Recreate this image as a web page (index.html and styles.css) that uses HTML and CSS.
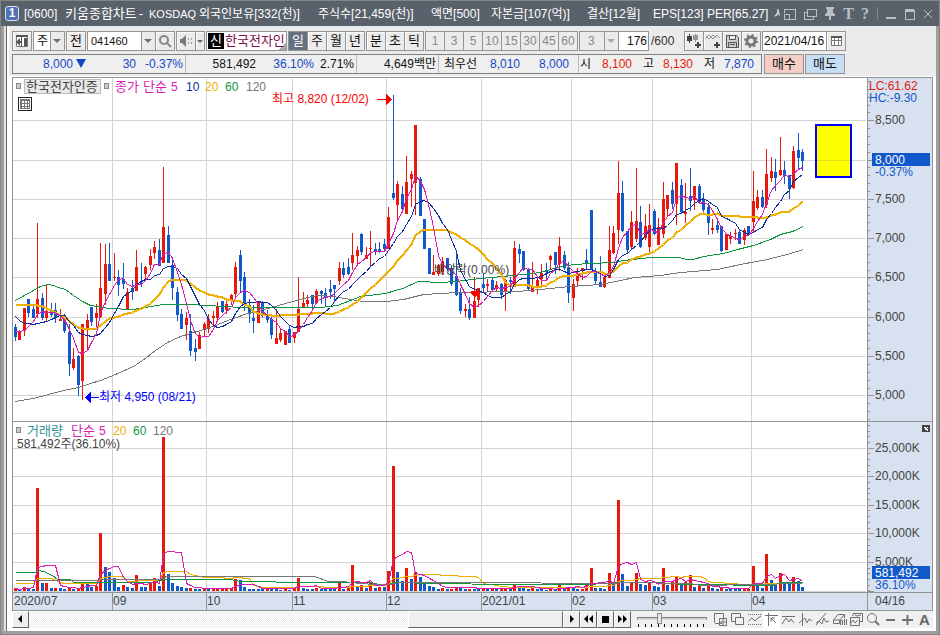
FILE: index.html
```html
<!DOCTYPE html>
<html lang="ko">
<head>
<meta charset="utf-8">
<title>[0600] 키움종합차트</title>
<link rel="stylesheet" href="styles.css">
</head>
<body>
<div class="window">
  <header class="title">
    <span class="badge">1</span>
    <h1 class="caption"><span>[0600]</span><span class="name">키움종합차트</span><span>-</span><span class="market">KOSDAQ</span><span>외국인보유[332(천)]</span><span>주식수[21,459(천)]</span><span>액면[500]</span><span>자본금[107(억)]</span><span>결산[12월]</span><span>EPS[123]</span><span>PER[65.27]</span><span>시</span></h1>
    <div class="title-tools">
      <button aria-label="크기"><svg width="13" height="12"><path d="M1 5V1H12V11H6M1 6H6V11H1Z"/></svg></button>
      <button aria-label="새 창"><svg width="14" height="12"><path d="M4 1H13V8H4ZM4 4H1V11H10V8"/></svg></button>
      <button aria-label="고정"><svg width="12" height="14"><path class="solid" d="M2 0H10V2H9V6L11 7V9H7V13H5V9H1V7L3 6V2H2Z"/></svg></button>
      <button class="glyph" aria-label="글꼴">T</button>
      <button class="glyph" aria-label="도움말">?</button>
      <i class="rule"></i>
      <button aria-label="최소화"><svg width="12" height="12"><path class="solid" d="M1 9H11V11H1Z"/></svg></button>
      <button aria-label="최대화"><svg width="12" height="12"><path d="M1 2H10V11H1Z"/><path class="solid" d="M1 1H10V4H1Z"/></svg></button>
      <button aria-label="닫기"><svg width="10" height="12"><path d="M1 2L9 10M9 2L1 10"/></svg></button>
    </div>
  </header>
  <main class="frame">
    <div class="inner">
      <div class="tools">
        <div class="toolbar">
          <button class="btn" aria-label="패널"><svg width="14" height="14"><path class="fillw" d="M1.500 1.500H12.500V12.500H1.500Z"/><path class="dark" d="M1 1H13V3H1ZM6 1H7V13H6ZM1 8L5 4V7H6V9H5V12ZM9 4H12V12H9Z"/></svg></button>
          <span class="select w32"><select aria-label="구분"><option>주</option></select></span>
          <button class="btn">전</button>
          <span class="group">
            <span class="select w69"><input type="text" value="041460" aria-label="종목코드"></span>
            <button class="btn" aria-label="검색"><svg width="14" height="14"><circle cx="6" cy="6" r="4" fill="none" stroke="#888" stroke-width="2"/><path d="M9 9L13 13" stroke="#888" stroke-width="2"/></svg></button>
          </span>
          <span class="group">
            <button class="btn" aria-label="소리"><svg width="14" height="12"><path fill="#777" d="M1 4H3L7 0V12L3 8H1Z"/><path fill="#999" d="M9 3H10V5H9ZM9 7H10V9H9ZM12 3H13V5H12ZM12 7H13V9H12Z"/></svg></button>
            <button class="btn slim" aria-label="소리 메뉴"><svg width="6" height="3"><path fill="#666" d="M0 0H6L3 3Z"/></svg></button>
          </span>
          <a class="stock" href="#stock"><b>신</b><span>한국전자인</span></a>
          <span class="group"><button class="btn on">일</button><button class="btn">주</button><button class="btn">월</button><button class="btn">년</button></span>
          <span class="group"><button class="btn">분</button><button class="btn">초</button><button class="btn">틱</button></span>
          <span class="group off"><button class="btn">1</button><button class="btn">3</button><button class="btn">5</button><button class="btn">10</button><button class="btn">15</button><button class="btn">30</button><button class="btn">45</button><button class="btn">60</button></span>
          <span class="group">
            <span class="select w40 off"><select aria-label="분 단위" disabled><option>3</option></select></span>
            <input class="count" type="text" value="176" aria-label="봉 개수">
          </span>
          <span class="total">/600</span>
          <span class="group">
            <button class="btn" aria-label="봉 추가"><svg width="16" height="16"><path fill="#444" d="M3 1H4V3H6V8H4V10H3V8H1V3H3Z"/><path fill="#999" d="M9 1H10V2H12V7H10V9H9V7H7V2H9Z"/><path fill="#444" d="M11 9H13V11H15V13H13V15H11V13H9V11H11Z"/></svg></button>
            <button class="btn" aria-label="지표 추가"><svg width="16" height="16"><path fill="none" stroke="#999" d="M0 6L4 2L8 6L12 2L15 5M1 3L4 6L8 2L12 5"/><path fill="#444" d="M11 9H13V11H15V13H13V15H11V13H9V11H11Z"/></svg></button>
            <button class="btn" aria-label="저장"><svg width="15" height="15"><path fill="#ccc" stroke="#555" d="M1.500 1.500H11.500L13.500 3.500V13.500H1.500ZM4.500 1.500V5.500H10.500V1.500M3.500 13.500V8.500H11.500V13.500M5 10.500H10"/></svg></button>
            <button class="btn" aria-label="설정"><svg width="14" height="14"><circle cx="7" cy="7" r="4" fill="none" stroke="#777" stroke-width="3"/><circle cx="7" cy="7" r="6" fill="none" stroke="#777" stroke-width="2" stroke-dasharray="2 2.700"/></svg></button>
          </span>
          <span class="group">
            <input class="date" type="text" value="2021/04/16" aria-label="날짜">
            <button class="btn" aria-label="달력"><svg width="13" height="12"><path fill="#fff" stroke="#777" d="M1.500 1.500H11.500V10.500H1.500ZM1.500 5.500H11.500M4.500 3V10M8.500 3V10"/><path fill="#555" d="M1 1H12V3H1Z"/></svg></button>
          </span>
        </div>
        <div class="quote">
          <div class="bar">
            <span class="blue">8,000<i class="down"></i></span><span class="blue">30</span><span class="blue sep">-0.37%</span>
            <span>581,492</span><span class="blue">36.10%</span><span class="sep">2.71%</span>
            <span class="sep">4,649백만</span>
            <span>최우선</span><span class="blue">8,010</span><span class="blue sep far">8,000</span>
            <span>시</span><span class="red">8,100</span><span>고</span><span class="red">8,130</span><span>저</span><span class="blue">7,870</span>
          </div>
          <button class="trade buy">매수</button>
          <button class="trade sell">매도</button>
        </div>
      </div>
      <svg class="chart" id="chart" viewBox="12 77 921 534" role="img" aria-label="한국전자인증 일봉 차트"></svg>
      <footer class="footer">
        <button class="sb" aria-label="왼쪽"><svg width="9" height="9"><path d="M6 0V8L2 4Z"/></svg></button>
        <div class="track"><div class="thumb"></div></div>
        <button class="sb" aria-label="오른쪽"><svg width="9" height="9"><path d="M3 0V8L7 4Z"/></svg></button>
        <button class="sb" aria-label="뒤로"><svg width="9" height="9"><path d="M4 0V8L0 4ZM9 0V8L5 4Z"/></svg></button>
        <button class="sb" aria-label="정지"><svg width="9" height="9"><path d="M1 1H8V8H1Z"/></svg></button>
        <button class="sb" aria-label="앞으로"><svg width="9" height="9"><path d="M0 0V8L4 4ZM5 0V8L9 4Z"/></svg></button>
        <div class="zoom">
          <input type="range" min="0" max="10" value="3" aria-label="확대">
          <svg width="68" height="3"><path stroke="#000" d="M1.500 0V3M8.500 0V3M14.500 0V3M21.500 0V3M27.500 0V3M34.500 0V3M40.500 0V3M47.500 0V3M53.500 0V3M60.500 0V3M66.500 0V3"/></svg>
        </div>
        <div class="draw">
          <button aria-label="차트 추가"><svg width="15" height="15"><path d="M9 11.500H2.500L1.500 10.500V1.500H10.500V6M6.500 6.500H13.500V13.500H6.500ZM10 6.500V13.500M6.500 10H13.500"/></svg></button>
          <button aria-label="창 복사"><svg width="15" height="15"><path d="M5 9.500H1.500V1.500H10.500V5M5.500 5.500H13.500V12.500H5.500Z"/></svg></button>
          <button aria-label="영역"><svg width="15" height="15"><path stroke-dasharray="1 1" d="M1 2.500H14M1 12.500H14"/><path d="M1.500 9L5 6L8 9L11 6L14 4"/></svg></button>
          <button class="on" aria-label="십자선"><svg width="15" height="15"><path d="M1 3.500H14M4.500 1V14M12 11L7 6M7 10V6H11"/></svg></button>
          <button aria-label="수평선"><svg width="15" height="15"><path d="M1 4.500H14M1 12L5 6L8 10L10 7L13 11"/></svg></button>
          <button aria-label="수직선"><svg width="15" height="15"><path d="M4.500 1V14M1 11L7 6L9 11L11 7L14 9"/></svg></button>
          <button aria-label="추세선"><svg width="15" height="15"><path d="M1 13L11 1M1 11L4 9L7 12L9 6L11 10L14 9"/></svg></button>
          <button aria-label="모두 지우기"><svg width="15" height="15"><path d="M1.500 8L6 2.500H12.500L8 8ZM1.500 8V11.500H7.500V8M12.500 3V6M10.500 13V8.500H8.500V13M12.500 7V13M14.500 7V13"/></svg></button>
          <button aria-label="이미지"><svg width="15" height="15"><path d="M4 4V1.500H13.500V9.500H11M1.500 5.500H10.500V13.500H1.500ZM2 11L4 8L6 11L9 8M6 3L8 4L12 3"/></svg></button>
          <button aria-label="돋보기"><svg width="15" height="15"><circle cx="6" cy="6" r="4.500"/><path d="M9 9L13 13" stroke-width="2"/></svg></button>
          <button aria-label="축소"><svg width="15" height="15"><path d="M3 8H12" stroke-width="2"/></svg></button>
          <button aria-label="확대"><svg width="15" height="15"><path d="M2 8H13M7.500 3V13" stroke-width="2"/></svg></button>
          <button class="auto" aria-label="자동">A</button>
        </div>
      </footer>
    </div>
  </main>
</div>
<script src="chart.js"></script>
</body>
</html>
```
FILE: styles.css
```css
* { box-sizing: border-box; }

body {
  margin: 0;
  font: 12px/14px "Liberation Sans", "Noto Sans CJK KR", sans-serif;
  color: #111;
}

button, input, select {
  margin: 0;
  padding: 0;
  border: 0;
  border-radius: 0;
  font: inherit;
  color: inherit;
  background: none;
}

.window {
  display: flex;
  flex-direction: column;
  min-height: 100vh;
  border: 1px solid #858585;
}

/* title bar */
.title {
  display: flex;
  align-items: center;
  height: 25px;
  padding: 0 6px 0 4px;
  color: #fff;
  background: #59616b;
}

.badge {
  width: 14px;
  height: 15px;
  border: 1px solid #dfe5f2;
  border-radius: 3px;
  background: #4f71b5;
  font-weight: bold;
  line-height: 13px;
  text-align: center;
}

.caption {
  display: grid;
  grid-template-columns: 41px 74px 10px 50px 119px 113px 60px 96px 66px 54px 67px 1fr;
  flex: 1 1 0;
  min-width: 0;
  margin: 0 3px 0 5px;
  overflow: hidden;
  font-size: 12px;
  font-weight: normal;
  line-height: 20px;
  white-space: nowrap;
}

.caption .name { font-size: 13px; }
.caption .market { font-size: 11px; }

.title-tools {
  display: flex;
  align-items: center;
  gap: 7px;
}

.title-tools button {
  display: flex;
  color: #b9bfc6;
}

.title-tools svg {
  fill: none;
  stroke: #b9bfc6;
  shape-rendering: crispEdges;
}

.title-tools .solid { fill: #b9bfc6; stroke: none; }
.title-tools .glyph { font: bold 16px/18px "Liberation Serif", serif; }
.title-tools .rule { width: 1px; height: 13px; margin-left: 1px; background: #838990; }

/* window frame */
.frame {
  display: flex;
  flex: 1;
  border: solid #a09e9c;
  border-width: 0 3px 3px;
  padding-left: 2px;
  background: #e4e4e4;
}

.inner {
  flex: 1;
  min-width: 0;
  border-left: 1px solid #666;
  background: #fff;
}

.tools {
  margin: 0 0 1px 2px;
  padding: 5px 0 2px 3px;
  background: #ebebeb;
}

.toolbar, .quote { display: flex; }
.toolbar { gap: 1px; margin-bottom: 3px; }
.quote { gap: 1px; }
.group { display: flex; }

.btn {
  display: flex;
  flex: none;
  align-items: center;
  justify-content: center;
  width: 20px;
  height: 20px;
  border: 1px solid #949494;
  background: #ebebeb;
  box-shadow: inset 1px 1px #fafafa;
  font-size: 13px;
}

.group > * + * { margin-left: -1px; }
.btn.slim { width: 10px; }
.btn.on { color: #fff; background: #66717f; box-shadow: none; }
.off .btn { color: #888; font-size: 12px; box-shadow: none; }
.fillw { fill: #fff; stroke: #777; }
.dark { fill: #555; }

.select {
  position: relative;
  display: flex;
  height: 20px;
  border: 1px solid #949494;
  background: linear-gradient(#949494, #949494) calc(100% - 13px) 0 / 1px 100% no-repeat,
    linear-gradient(#ebebeb, #ebebeb) 100% 0 / 13px 100% no-repeat, #fff;
}

.select::after {
  content: "";
  position: absolute;
  top: 7px;
  right: 3px;
  border: solid transparent;
  border-width: 4px 4px 0;
  border-top-color: #707070;
  pointer-events: none;
}

.select select, .select input {
  width: 100%;
  padding: 0 14px 0 3px;
  appearance: none;
  font-size: 12px;
}

.select input { font-size: 11px; }
.select.off { background-color: #ebebeb; color: #888; }
.select.off select { padding-left: 8px; color: #888; opacity: 1; }
.select.off::after { border-top-color: #aaa; }
.w32 { width: 32px; }
.w40 { width: 40px; }
.w69 { width: 69px; }

.stock {
  display: flex;
  width: 81px;
  height: 20px;
  padding: 1px;
  border: 1px solid #949494;
  color: #80104a;
  background: linear-gradient(135deg, transparent 50%, #aaa 50%) 100% 100% / 7px 7px no-repeat #fff;
  font-size: 13px;
  line-height: 16px;
  text-decoration: none;
  white-space: nowrap;
}

.stock b {
  flex: none;
  width: 16px;
  margin-right: 1px;
  color: #fff;
  background: #000;
  font-weight: normal;
  text-align: center;
}

.count, .date {
  height: 20px;
  border: 1px solid #949494;
  background: #fff;
}

.count { width: 31px; padding-right: 1px; text-align: right; }
.date { width: 65px; padding-left: 1px; }
.total { width: 33px; padding-left: 1px; line-height: 20px; color: #333; }

/* quote line */
.bar {
  display: grid;
  grid-template-columns: 73px 50px 50px 70px 58px 43px 82px 38px 43px 59px 12px 41px 22px 39px 22px 39px;
  width: 750px;
  margin-right: 1px;
  border: 1px solid #808080;
  background: #efefef;
  line-height: 18px;
  text-align: right;
  white-space: nowrap;
}

.sep { padding-right: 2px; border-right: 1px solid #bbb; }
.far { padding-right: 9px; }
.blue { color: #1548c8; }
.red { color: #e8190a; }

.down {
  display: inline-block;
  margin-left: 3px;
  border: solid transparent;
  border-width: 9px 5px 0;
  border-top-color: #1548c8;
}

.trade {
  width: 40px;
  border: 1px solid #949494;
  font-size: 13px;
}

.buy { background: #f5cdc7; }
.sell { background: #c7ddf3; }

/* chart */
.chart {
  display: block;
  width: calc(100% - 8px);
  margin: 0 3px 0 5px;
  shape-rendering: crispEdges;
}

.chart text { font-size: 12px; white-space: pre; }

/* bottom row */
.footer {
  display: flex;
  height: 17px;
  margin: 0 3px 0 5px;
}

.sb {
  display: flex;
  align-items: center;
  justify-content: center;
  width: 17px;
  border: 1px solid #fff;
  border-right-color: #666;
  border-bottom-color: #666;
  background: #efefef;
}

.track {
  display: flex;
  flex: 1;
  justify-content: flex-end;
  background: repeating-conic-gradient(#ededed 0 25%, #fff 0 50%) 0 0 / 2px 2px;
}

.thumb {
  width: 29%;
  border: 1px solid #fff;
  border-right-color: #666;
  border-bottom-color: #666;
  background: #efefef;
}

.zoom {
  display: flex;
  flex-direction: column;
  width: 81px;
  padding: 1px 4px 0 6px;
  background: #f0f0f0;
}

.zoom input { width: 70px; height: 12px; appearance: none; }

.zoom input::-webkit-slider-runnable-track {
  height: 3px;
  border: 1px solid #808080;
  border-bottom-color: #ddd;
  background: #ccc;
}

.zoom input::-webkit-slider-thumb {
  width: 5px;
  height: 11px;
  margin-top: -5px;
  appearance: none;
  border: 1px solid #888;
  background: #e6e6e6;
}

.draw { display: flex; background: #f0f0f0; }

.draw button {
  display: flex;
  align-items: center;
  justify-content: center;
  width: 17px;
}

.draw svg { fill: none; stroke: #707070; }
.draw .on { background: #fff; }
.draw .auto { color: #666; font-size: 15px; font-weight: bold; }
```
FILE: chart.js
```js
const svg = document.getElementById('chart');
const RED = '#e8190a', BLUE = '#1159cb', PINK = '#d81cb4', NAVY = '#0b2da0';
const GOLD = '#f0ae00', GREEN = '#0f9540', GREY = '#777', GRID = '#d4d4d4', LINE = '#949494', INK = '#444';

function add(tag, attrs, text) {
  const el = document.createElementNS('http://www.w3.org/2000/svg', tag);
  for (const k in attrs) el.setAttribute(k, attrs[k]);
  if (text) el.textContent = text;
  svg.appendChild(el);
}
const rect = (x, y, w, h, fill, stroke) =>
  add('rect', stroke ? { x: x + .5, y: y + .5, width: w - 1, height: h - 1, fill, stroke } : { x, y, width: w, height: h, fill });
const text = (x, y, s, fill = INK, size) => add('text', size ? { x, y, fill, style: 'font-size:' + size + 'px' } : { x, y, fill }, s);
const line = (points, stroke, w = 1) =>
  add('polyline', { points: points.map(p => (p[0] + .5) + ',' + (p[1] + .5)).join(' '), fill: 'none', stroke, 'stroke-width': w });

// [direction, high, body top, body bottom, low]
const candles = `B324,327,337,341 R330,331,340,340 R308,308,331,336 B299,299,313,317 B304,309,318,318 R223,299,314,318
B293,298,318,320 R285,311,318,321 B303,311,315,317 B303,310,317,323 R309,319,321,321 B314,315,331,333 B324,332,364,376
R348,359,368,370 B355,356,385,396 R324,324,381,400 R314,320,329,350 B307,307,322,326 R304,313,318,328 R243,288,317,318
R244,264,294,305 B243,264,281,281 R253,277,278,281 B270,277,285,296 B263,279,284,289 R288,292,309,309 B280,288,292,300
R250,267,291,291 B263,283,284,287 R266,267,274,280 R249,256,265,270 R241,247,253,259 B239,250,266,266 R167,227,263,263
B226,235,263,263 B257,265,288,300 B287,292,315,321 B309,314,329,329 R312,318,325,340 B314,331,351,356 B339,348,352,361
R332,335,349,349 R322,324,330,336 R314,319,329,333 R311,316,318,325 R302,306,318,322 B301,301,312,313 R300,304,310,314
R294,295,300,305 R262,267,294,299 B250,255,281,292 B272,277,303,311 B299,305,314,323 B305,318,321,333 R302,302,323,323
B301,302,316,318 B310,315,320,323 B317,319,335,339 R309,338,344,344 R329,333,340,342 R331,331,345,345 B325,329,343,343
R332,332,338,343 R277,309,332,332 R292,303,308,308 R295,300,304,308 B295,295,304,310 R289,291,303,304 B290,291,294,304
B288,293,298,307 B280,289,292,299 B285,285,289,302 R262,268,281,285 B262,268,275,278 B258,267,274,275 R233,255,263,270
R246,250,256,266 B233,234,252,255 R247,255,259,259 R231,248,249,266 B243,249,251,255 B242,249,251,253 B239,244,249,250
R207,217,249,249 B95,193,198,200 R181,184,205,221 B186,194,209,211 R156,182,214,214 R171,174,179,207 R125,125,183,215
B177,179,216,216 B219,219,249,249 B248,248,274,274 R255,272,275,275 R264,265,274,276 R257,261,272,275 B258,258,269,271
B265,268,284,286 B250,276,295,296 B288,293,311,314 R304,309,311,317 B297,309,318,320 R277,301,318,318 R288,288,300,307
B273,284,288,293 R279,284,286,291 B278,280,290,292 R281,285,289,291 B283,284,295,299 R279,280,292,311 B277,280,282,294
R241,248,287,287 B244,249,254,263 B251,251,270,271 B268,270,289,290 R262,286,292,292 R276,280,287,294 R264,273,279,286
B263,271,272,280 R255,256,260,269 B252,252,265,274 R237,246,264,271 B251,255,268,270 B262,267,293,303 R279,284,298,311
R268,273,281,286 R268,268,271,280 B249,260,263,270 B210,210,269,269 B268,271,281,285 B256,282,287,287 R275,277,287,288
R226,250,278,278 R226,233,253,254 R161,193,230,244 B181,193,231,232 B231,231,250,254 R211,222,247,249 R168,221,239,242
B206,222,247,248 R214,226,238,240 R204,225,247,253 B209,211,234,235 R218,227,245,245 R182,199,234,238 R195,195,209,217
B182,190,204,209 R163,163,204,225 B179,185,212,213 R183,212,214,223 B168,196,201,211 R186,186,200,210 B184,186,202,203
B193,199,210,212 B203,207,223,235 R219,228,230,234 B220,225,230,233 B226,226,251,252 R233,234,250,250 R232,236,239,244
R229,233,234,240 B229,232,244,244 R228,230,240,245 B226,226,234,234 R171,201,222,232 R190,197,208,210 B190,197,207,208
R149,174,205,208 R157,171,178,182 B159,172,178,191 R137,170,175,176 B161,170,176,184 B175,175,189,199 R146,151,188,189
B133,150,158,169 B149,152,161,171`.split(/\s+/).map(s => [s[0], ...s.slice(1).split(',').map(Number)]);

const volumes = [3,2,4,2,2,103,8,8.3,3,3.1,3,2,3,2,2.1,8,7,4,5,58,24,19,13,4,6,4,3,16,4,4,8,13,5,154,17,8,5,4,3,3.1,2,2,2.1,2,2.1,2.2,
2.3,2.4,2.5,12,11,4,2,2,2,1.9,2,2,1.9,1,2,1,2,13,3,2,2,3,2,2,2,2,9,2,3,26,4,6,3,9,3,4,3.9,20,125,19,10,23,12,19,14,8,5,4,2,3,2,2.3,4,3,2,
2.4,2,2,3,2,2.1,2,3,3.1,2,7,5,3,2,3,2,2,1,1.5,1,7,2,4,3,2,2.1,7,23,3,3,2,18,8,91,17,5,8,18,7,6,9,5,4,23,6,9,15,8,8.5,16,4,7,3,5,3,2,
2.5,2,2,1.9,1.8,1.9,2,25,5,3,37,11,6,18,9,8,14,10,4];

const cx = i => Math.floor(15 + 4.5 * i);
function average(values, n, lead) {
  return values.map((_, i) => {
    if (i < n - 1) return [cx(i), Math.round(lead[i])];
    let sum = 0;
    for (let k = i - n + 1; k <= i; k++) sum += values[k];
    return [cx(i), Math.round(sum / n)];
  });
}

// panels and axes
rect(12, 77, 921, 534, '#fff');
rect(867, 77, 66, 534, '#d7e1ef');
rect(12, 592, 921, 19, '#d7e1ef');
for (const y of [120, 160, 199, 238, 277, 317, 356, 395, 448, 476, 505, 533, 562, 591]) {
  rect(13, y, 853, 1, GRID);
  rect(868, y, 6, 1, LINE);
}
for (let y = 81; y < 421; y += 7.86) rect(868, Math.round(y), 2, 1, LINE);
for (let y = 425; y < 592; y += 5.7) rect(868, Math.round(y), 2, 1, LINE);
for (const x of [112, 206, 292, 386, 481, 571, 652, 751]) {
  rect(x, 78, 1, 514, GRID);
  rect(x, 593, 1, 17, LINE);
}
rect(867, 77, 1, 534, LINE);
rect(12, 421, 921, 1, LINE);
rect(12, 592, 921, 1, LINE);
rect(12, 77, 921, 534, 'none', LINE);
rect(815, 124, 37, 54, '#ff0', '#00f');
rect(816, 125, 35, 52, '#ff0', '#00f');
rect(817, 160, 33, 1, '#e0e020');

// price
candles.forEach(([d, hi, top, bot, lo], i) => {
  const c = d === 'R' ? RED : BLUE, x = cx(i);
  rect(x, hi, 1, Math.max(lo - hi, 1), c);
  rect(x - 1, top, 3, Math.max(bot - top, 1), c);
});
const close = candles.map(c => c[0] === 'R' ? c[2] : c[3]);
line([[15,401],[33,398],[48,394],[63,390],[78,387],[90,383],[100,380],[115,374],[133,366],[142,360],[155,350],[167,342],[180,336],[200,330],[215,325],
[230,319],[250,312],[268,308],[285,303],[300,299],[307,297],[317,295],[333,296],[350,299],[363,301],[387,301],[403,299],[423,294],[457,292],[517,291],
[540,289],[570,286],[600,284],[620,280],[634,277],[660,275],[680,272],[717,269],[740,264],[767,259],[790,253],[803,249]], GREY);
line([[15,300],[24,295],[33,290],[40,286],[47,284],[53,285],[58,287],[65,289],[73,295],[82,301],[90,305],[96,306],[108,308],[132,309],[145,307],[162,304],
[190,304],[206,305],[225,306],[240,307],[320,307],[337,305],[350,300],[360,296],[385,293],[402,288],[418,281],[440,282],[455,281],[480,278],[513,275],
[540,272],[557,267],[573,264],[590,263],[613,262],[623,260],[650,257],[678,257],[687,259],[693,259],[703,256],[723,253],[737,249],[753,245],[770,239],
[780,234],[792,231],[803,226]], GREEN);
line(average(close, 20, [304,304,304,304,304,305,306,308,310,312,315,317,321,324,327,328,328,328,328]), GOLD, 2);
line(average(close, 10, [316,320,323,323,324,323,322,321,319]), NAVY);
line(average(close, 5, [331,331,330,326]), PINK);

// volume
volumes.forEach((v, i) => rect(cx(i) - 1, 591 - Math.round(v), 3, Math.round(v), i === 0 || v > volumes[i - 1] ? RED : BLUE));
const vol = volumes.map(v => 590 - v);
line(average(vol, 20, [583,583,583,583,583,578,578,578,578,580,582,583,583,583,583,583,583,583,583]), GOLD);
line([[15,572],[36,572],[38,570],[43,571],[52,575],[57,579],[70,579],[73,582],[150,582],[165,579],[230,579],[240,581],[310,582],[370,582],[378,584],
[388,584],[393,582],[437,583],[503,584],[587,584],[620,582],[657,582],[663,583],[690,584],[773,585],[780,582],[802,582]], GREEN);
line([[15,580],[97,580],[100,579],[160,579],[166,576],[314,576],[328,581],[342,581],[350,582],[373,584],[390,584],[397,582],[503,582],[577,583],[613,583],
[620,582],[690,583],[700,585],[753,584],[802,583]], GREY);
line(average(vol, 5, [588,589,588,588]), PINK);

// legends
rect(16, 83, 5, 6, '#ccc', '#888');
rect(24, 79, 77, 15, '#e8e8e8', '#bbb');
text(26, 91, '한국전자인증', INK, 13);
rect(104, 83, 5, 6, '#ccc', '#888');
[[115,'종가',PINK,13],[143,'단순',PINK,13],[171,'5',PINK],[186,'10',NAVY],[205,'20',GOLD],[225,'60',GREEN],[246,'120',GREY]]
  .forEach(l => text(l[0], 91, l[1], l[2], l[3]));
rect(18, 97, 14, 14, '#fff', '#222');
for (const k of [0, 3, 6]) { rect(20, 100 + k, 10, 1, GREY); rect(21 + k, 99, 1, 10, GREY); }
rect(20, 99, 10, 10, 'none', GREY);
rect(16, 427, 5, 6, '#ccc', '#888');
[[27,'거래량','#2f9494',13],[71,'단순',PINK,13],[99,'5',PINK],[113,'20',GOLD],[133,'60',GREEN],[153,'120',GREY]]
  .forEach(l => text(l[0], 435, l[1], l[2], l[3]));
text(17, 448, '581,492주(36.10%)', INK);

// markers
text(272, 103, '최고 8,820 (12/02)', '#f00');
rect(377, 99, 10, 1, '#f00');
add('path', { d: 'M386 94V105L392 99.500Z', fill: '#f00' });
text(99, 401, '최저 4,950 (08/21)', '#00f');
rect(90, 397, 9, 1, '#00f');
add('path', { d: 'M91 392V403L85 397.500Z', fill: '#00f' });
text(434, 274, '배당락(0.00%)', INK);
add('path', { d: 'M472 291H477V290H479V291H480V292L475 297L469 292Z', fill: '#f00' });

// axis labels
text(869, 90, 'LC:61.62', RED);
text(869, 102, 'HC:-9.30', '#1159cb');
[[124,'8,500'],[203,'7,500'],[242,'7,000'],[281,'6,500'],[321,'6,000'],[360,'5,500'],[399,'5,000'],[452,'25,000K'],[480,'20,000K'],
[509,'15,000K'],[537,'10,000K'],[566,'5,000K'],[605,'04/16']].forEach(l => text(875, l[0], l[1]));
rect(872, 153, 58, 13, BLUE);
text(875, 164, '8,000', '#fff');
text(875, 176, '-0.37%', BLUE);
rect(872, 566, 58, 13, BLUE);
text(875, 577, '581,492', '#fff');
text(875, 589, '36.10%', BLUE);
[[14,'2020/07'],[113,'09'],[207,'10'],[293,'11'],[387,'12'],[482,'2021/01'],[572,'02'],[653,'03'],[752,'04']].forEach(l => text(l[0], 605, l[1]));
rect(922, 425, 8, 7, '#444');
add('path', { d: 'M924.500 427L928 430.500M928 427L924.500 430.500', stroke: '#fff' });
```
